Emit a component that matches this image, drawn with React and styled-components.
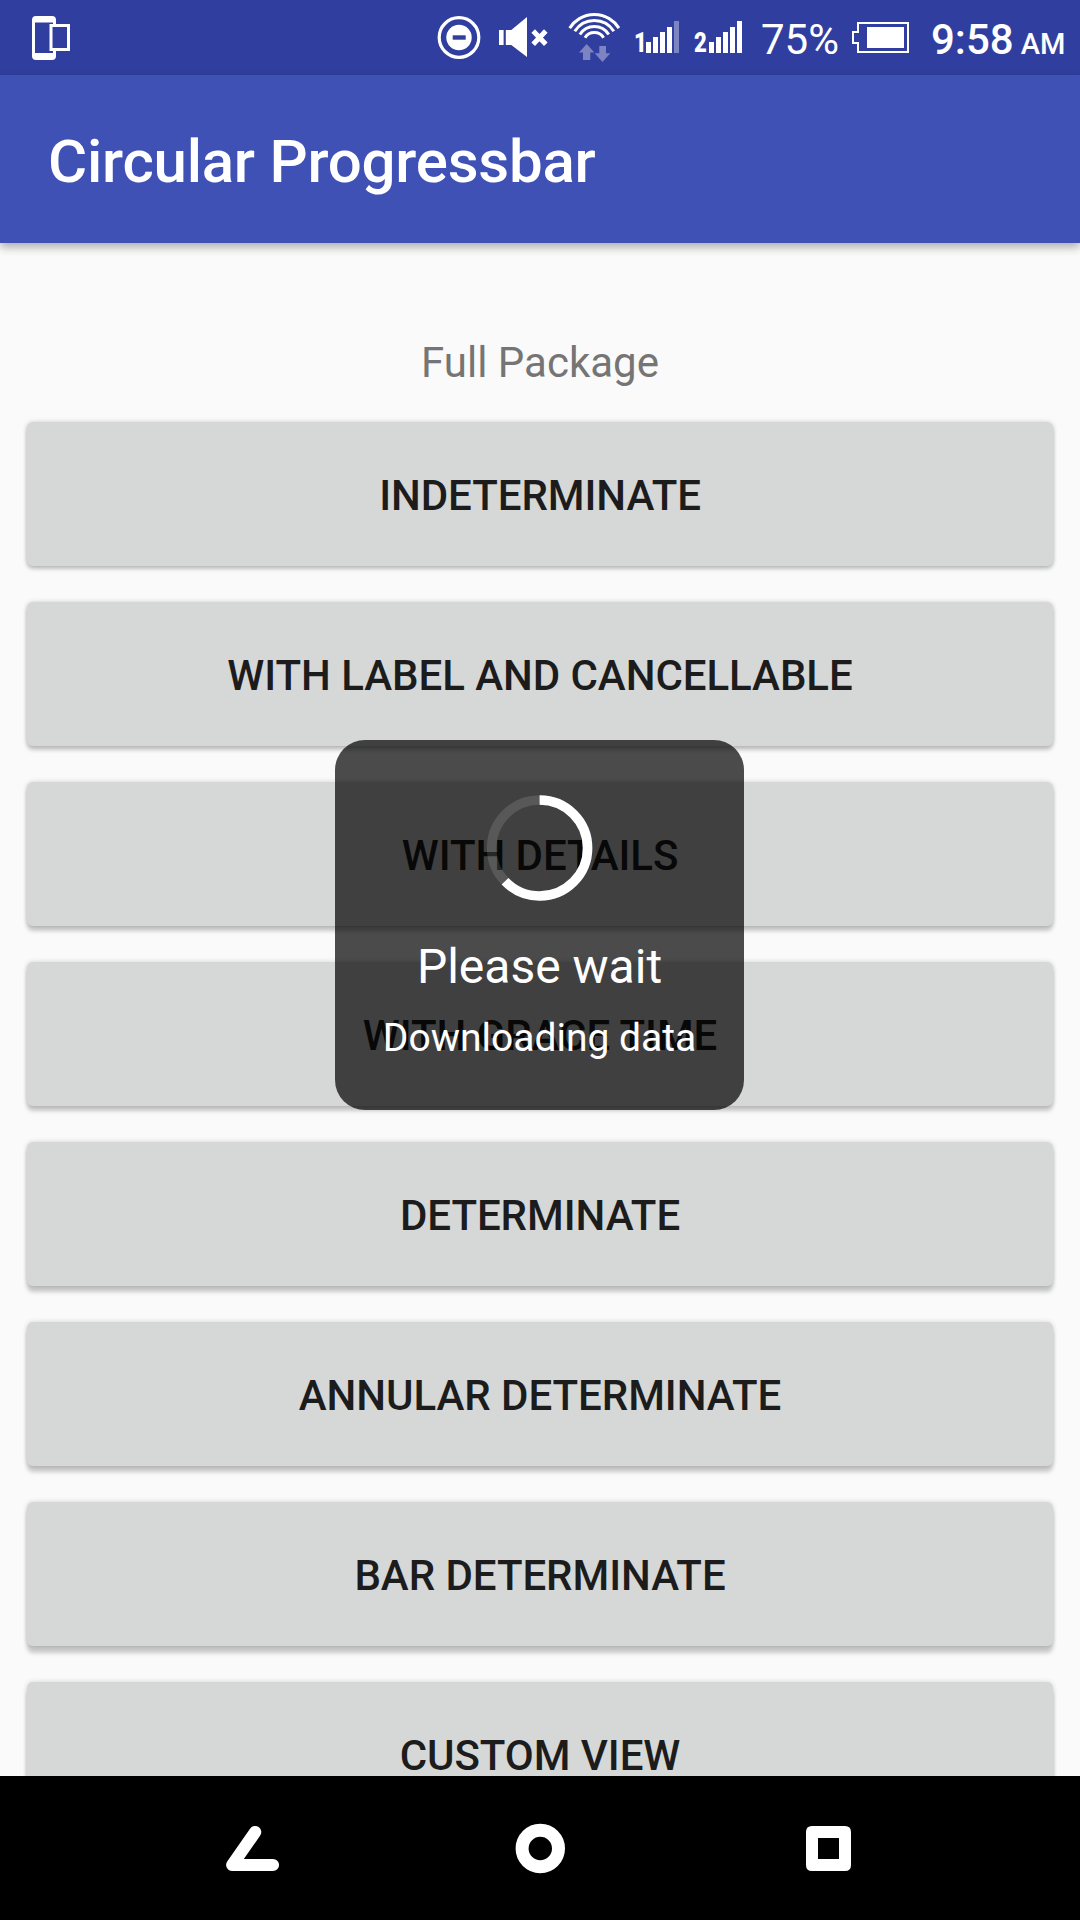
import React from 'react';
import styled, { createGlobalStyle } from 'styled-components';

const GlobalStyle = createGlobalStyle`
  *, *::before, *::after { box-sizing: border-box; }
  html, body { margin: 0; padding: 0; background: #fafafa; }
`;

const Screen = styled.div`
  position: relative;
  display: flex;
  flex-direction: column;
  width: 1080px;
  height: 1920px;
  overflow: hidden;
  background: #fafafa;
  font-family: Roboto, 'Noto Sans', sans-serif;
`;

const StatusBar = styled.header`
  display: flex;
  align-items: flex-start;
  justify-content: space-between;
  flex: none;
  height: 75px;
  padding: 0 15px 0 30px;
  background: #303f9f;
  color: #fff;
`;

const StatusGroup = styled.div`
  display: flex;
  height: 75px;
`;

const StatusIcon = styled.svg`
  display: block;
  flex: none;
  height: 75px;
  margin-left: ${(p) => p.$gap || 0}px;
`;

const SimNumber = styled.span`
  width: ${(p) => p.$width}px;
  margin-left: ${(p) => p.$gap}px;
  padding-top: 30px;
  font-size: 27px;
  font-weight: 900;
  line-height: 27px;
  transform: scaleX(0.82);
  transform-origin: 0 0;
`;

const BatteryText = styled.span`
  width: 78px;
  margin-left: 19px;
  font-size: 42px;
  line-height: 79px;
  white-space: nowrap;
`;

const Clock = styled.span`
  margin-left: 22px;
  width: 134px;
  font-size: 42px;
  font-weight: 500;
  line-height: 79px;
  white-space: nowrap;
`;

const Meridiem = styled.span`
  margin-left: 7px;
  font-size: 29px;
`;

const AppBar = styled.div`
  position: relative;
  z-index: 1;
  display: flex;
  align-items: center;
  flex: none;
  height: 168px;
  padding: 6px 48px 0;
  background: #3f51b5;
  box-shadow: 0 4px 9px rgba(0, 0, 0, 0.32);
`;

const Title = styled.h1`
  margin: 0;
  color: #fff;
  font-size: 60px;
  font-weight: 500;
  letter-spacing: -0.23px;
  line-height: 70px;
`;

const Content = styled.main`
  display: flex;
  flex: 1;
  flex-direction: column;
  min-height: 0;
  padding: 95px 27px 0;
  overflow: hidden;
`;

const SectionLabel = styled.h2`
  flex: none;
  margin: 0 0 35px;
  color: #757575;
  font-size: 42px;
  font-weight: 400;
  line-height: 49px;
  text-align: center;
`;

const ButtonList = styled.div`
  display: flex;
  flex-direction: column;
  gap: 36px;
`;

const ActionButton = styled.button`
  flex: none;
  height: 144px;
  padding: 4px 0 0;
  border: 0;
  border-radius: 6px;
  background: #d6d8d7;
  color: #1c1c1c;
  font: 500 42px/50px Roboto, 'Noto Sans', sans-serif;
  letter-spacing: -0.05px;
  text-transform: uppercase;
  box-shadow:
    0 ${(p) => p.$depth}px 4px rgba(0, 0, 0, 0.2),
    0 0 5px rgba(0, 0, 0, 0.17);
`;

const NavBar = styled.nav`
  position: relative;
  display: flex;
  align-items: center;
  justify-content: space-around;
  flex: none;
  height: 144px;
  padding: 0 108px;
  background: #000;
`;

const NavIcon = styled.svg`
  display: block;
  width: 60px;
  height: 60px;
`;

const Hud = styled.div`
  position: absolute;
  z-index: 2;
  top: 740px;
  left: 335px;
  display: flex;
  flex-direction: column;
  align-items: center;
  width: 409px;
  height: 370px;
  padding-top: 54px;
  border-radius: 30px;
  background: rgba(0, 0, 0, 0.7);
  color: #fff;
`;

const Spinner = styled.svg`
  display: block;
  width: 108px;
  height: 108px;
`;

const HudLabel = styled.div`
  margin-top: 37px;
  font-size: 48px;
  line-height: 56px;
`;

const HudDetails = styled.div`
  margin-top: 20px;
  font-size: 39px;
  line-height: 46px;
`;

const DIM = '#7c84c2';
const ACTIONS = [
  'Indeterminate',
  'With label and cancellable',
  'With details',
  'With grace time',
  'Determinate',
  'Annular determinate',
  'Bar determinate',
  'Custom view',
];

function SignalBars({ level }) {
  const tops = [42, 37, 32, 27, 21];
  return (
    <StatusIcon width="33" viewBox="0 0 33 75">
      {tops.map((top, i) => (
        <rect key={top} x={i * 7} y={top} width="5" height={53 - top} fill={i < level ? '#fff' : DIM} />
      ))}
    </StatusIcon>
  );
}

function wifiArc(r) {
  const dx = r * 0.848;
  const y = 43.5 - r * 0.53;
  return `M${26.3 - dx} ${y}A${r} ${r} 0 0 1 ${26.3 + dx} ${y}`;
}

function ProgressRing({ value }) {
  const r = 48;
  const length = 2 * Math.PI * r;
  return (
    <Spinner viewBox="0.4 0 108 108" fill="none" strokeWidth="9.5">
      <circle cx="54" cy="54" r={r} stroke="#fff" strokeOpacity="0.13" />
      <circle
        cx="54"
        cy="54"
        r={r}
        stroke="#fff"
        strokeDasharray={`${length * value} ${length}`}
        transform="rotate(-90 54 54)"
      />
    </Spinner>
  );
}

export default function App() {
  return (
    <Screen>
      <GlobalStyle />
      <StatusBar>
        <StatusGroup>
          <StatusIcon width="42" viewBox="30 0 42 75">
            <path
              fill="#fff"
              fillRule="evenodd"
              d="M36 16H52Q56 16 56 20V56Q56 60 52 60H36Q32 60 32 56V20Q32 16 36 16ZM35 22.5V53H53V22.5Z"
            />
            <rect x="51" y="25.5" width="17.5" height="24" fill="#303f9f" stroke="#fff" strokeWidth="3" />
          </StatusIcon>
        </StatusGroup>
        <StatusGroup>
          <StatusIcon width="44" viewBox="437.3 0 44 75">
            <circle cx="459.3" cy="37.5" r="19.8" fill="none" stroke="#fff" strokeWidth="3.2" />
            <circle cx="459.3" cy="37.5" r="12.7" fill="#fff" />
            <rect x="453" y="35.3" width="13" height="4.4" fill="#303f9f" />
          </StatusIcon>
          <StatusIcon $gap={17.7} width="50" viewBox="499 0 50 75">
            <path fill="#fff" d="M499 30h4.6v15H499zM505.8 30h5.5L527 17v40L511.3 45h-5.5z" />
            <path d="M533.2 31L545.8 44.2M545.8 31L533.2 44.2" stroke="#fff" strokeWidth="5" />
          </StatusIcon>
          <StatusIcon $gap={19} width="53" viewBox="0 0 53 75">
            <g fill="none" stroke="#fff" strokeWidth="3">
              {[29, 23, 17, 11].map((r) => (
                <path key={r} d={wifiArc(r)} />
              ))}
            </g>
            <path fill={DIM} d="M18.7 44L26.3 52.5H22.3V60H15V52.5H11Z" />
            <path fill={DIM} d="M34.5 62L26.7 53.3H31.3V46H38V53.3H42.3Z" />
          </StatusIcon>
          <SimNumber $gap={12.5} $width={12.5}>1</SimNumber>
          <SignalBars level={4} />
          <SimNumber $gap={15} $width={15}>2</SimNumber>
          <SignalBars level={5} />
          <BatteryText>75%</BatteryText>
          <StatusIcon $gap={13} width="57" viewBox="852 0 57 75">
            <path d="M858 23H908V52H858V43H853V32H858Z" fill="none" stroke="#fff" strokeWidth="2" />
            <rect x="867" y="27" width="37" height="21" fill="#fff" />
          </StatusIcon>
          <Clock>
            9:58<Meridiem>AM</Meridiem>
          </Clock>
        </StatusGroup>
      </StatusBar>
      <AppBar>
        <Title>Circular Progressbar</Title>
      </AppBar>
      <Content>
        <SectionLabel>Full Package</SectionLabel>
        <ButtonList>
          {ACTIONS.map((label, i) => (
            <ActionButton key={label} $depth={3 + i * 0.6}>
              {label}
            </ActionButton>
          ))}
        </ButtonList>
      </Content>
      <NavBar>
        <NavIcon viewBox="222 1818 60 60">
          <path
            d="M255.2 1832L232.2 1865H273"
            fill="none"
            stroke="#fff"
            strokeWidth="12.2"
            strokeLinecap="round"
            strokeLinejoin="round"
          />
        </NavIcon>
        <NavIcon viewBox="510 1818 60 60">
          <circle cx="540.3" cy="1848.5" r="18.2" fill="none" stroke="#fff" strokeWidth="13" />
        </NavIcon>
        <NavIcon viewBox="798 1818 60 60">
          <path
            fill="#fff"
            fillRule="evenodd"
            d="M812 1826H845Q851 1826 851 1832V1865Q851 1871 845 1871H812Q806 1871 806 1865V1832Q806 1826 812 1826ZM818 1838V1859H839V1838Z"
          />
        </NavIcon>
      </NavBar>
      <Hud role="status">
        <ProgressRing value={0.627} />
        <HudLabel>Please wait</HudLabel>
        <HudDetails>Downloading data</HudDetails>
      </Hud>
    </Screen>
  );
}
